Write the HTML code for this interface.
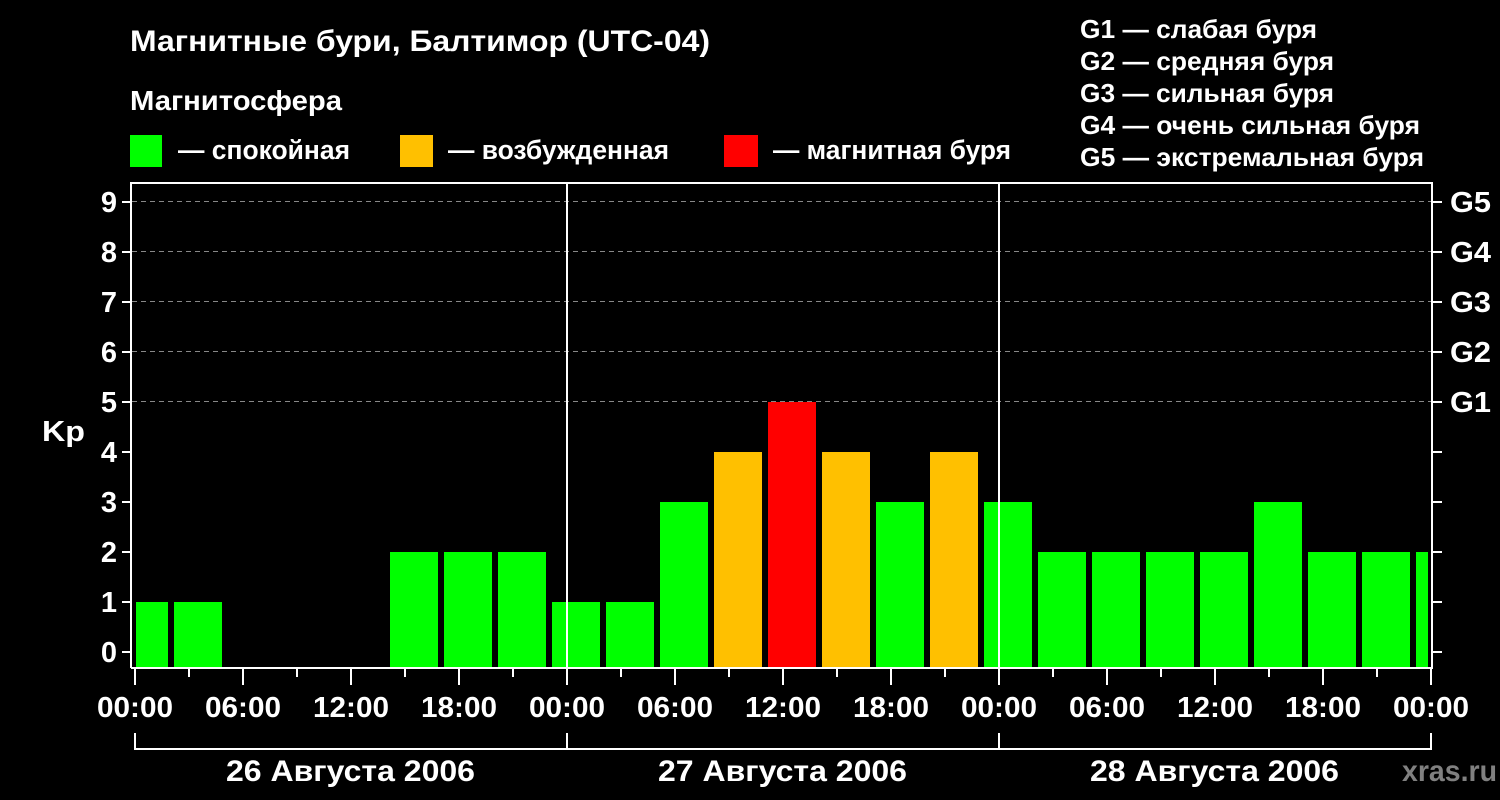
<!DOCTYPE html>
<html><head><meta charset="utf-8"><style>
html,body{margin:0;padding:0;background:#000;width:1500px;height:800px;overflow:hidden}
svg{display:block}
text{font-family:"Liberation Sans",sans-serif;font-weight:bold;fill:#fff}
</style></head><body>
<svg width="1500" height="800" viewBox="0 0 1500 800">
<rect width="1500" height="800" fill="#000"/>
<text x="130" y="51" font-size="30" textLength="580" lengthAdjust="spacingAndGlyphs">Магнитные бури, Балтимор (UTC-04)</text>
<text x="130" y="110" font-size="28" textLength="212" lengthAdjust="spacingAndGlyphs">Магнитосфера</text>
<rect x="130" y="135" width="32" height="32" fill="#00ff00"/>
<text x="178" y="159" font-size="27" textLength="172" lengthAdjust="spacingAndGlyphs">— спокойная</text>
<rect x="400" y="135" width="33" height="32" fill="#ffc000"/>
<text x="448" y="159" font-size="27" textLength="221" lengthAdjust="spacingAndGlyphs">— возбужденная</text>
<rect x="724" y="135" width="34" height="32" fill="#ff0000"/>
<text x="773" y="159" font-size="27" textLength="238" lengthAdjust="spacingAndGlyphs">— магнитная буря</text>
<g font-size="26">
<text x="1080" y="38" textLength="237" lengthAdjust="spacingAndGlyphs">G1 — слабая буря</text>
<text x="1080" y="70" textLength="254" lengthAdjust="spacingAndGlyphs">G2 — средняя буря</text>
<text x="1080" y="102" textLength="254" lengthAdjust="spacingAndGlyphs">G3 — сильная буря</text>
<text x="1080" y="134" textLength="340" lengthAdjust="spacingAndGlyphs">G4 — очень сильная буря</text>
<text x="1080" y="166" textLength="344" lengthAdjust="spacingAndGlyphs">G5 — экстремальная буря</text>
</g>
<g stroke="#888" stroke-width="1" stroke-dasharray="5,4">
<line x1="132" y1="201.5" x2="1431" y2="201.5"/>
<line x1="132" y1="251.5" x2="1431" y2="251.5"/>
<line x1="132" y1="301.5" x2="1431" y2="301.5"/>
<line x1="132" y1="351.5" x2="1431" y2="351.5"/>
<line x1="132" y1="401.5" x2="1431" y2="401.5"/>
</g>
<g>
<rect x="136" y="602" width="32" height="66" fill="#00ff00"/>
<rect x="174" y="602" width="48" height="66" fill="#00ff00"/>
<rect x="390" y="552" width="48" height="116" fill="#00ff00"/>
<rect x="444" y="552" width="48" height="116" fill="#00ff00"/>
<rect x="498" y="552" width="48" height="116" fill="#00ff00"/>
<rect x="552" y="602" width="48" height="66" fill="#00ff00"/>
<rect x="606" y="602" width="48" height="66" fill="#00ff00"/>
<rect x="660" y="502" width="48" height="166" fill="#00ff00"/>
<rect x="714" y="452" width="48" height="216" fill="#ffc000"/>
<rect x="768" y="402" width="48" height="266" fill="#ff0000"/>
<rect x="822" y="452" width="48" height="216" fill="#ffc000"/>
<rect x="876" y="502" width="48" height="166" fill="#00ff00"/>
<rect x="930" y="452" width="48" height="216" fill="#ffc000"/>
<rect x="984" y="502" width="48" height="166" fill="#00ff00"/>
<rect x="1038" y="552" width="48" height="116" fill="#00ff00"/>
<rect x="1092" y="552" width="48" height="116" fill="#00ff00"/>
<rect x="1146" y="552" width="48" height="116" fill="#00ff00"/>
<rect x="1200" y="552" width="48" height="116" fill="#00ff00"/>
<rect x="1254" y="502" width="48" height="166" fill="#00ff00"/>
<rect x="1308" y="552" width="48" height="116" fill="#00ff00"/>
<rect x="1362" y="552" width="48" height="116" fill="#00ff00"/>
<rect x="1416" y="552" width="12" height="116" fill="#00ff00"/>
</g>
<g stroke="#fff" stroke-width="2" fill="none">
<polyline points="131,668 131,183 1432,183 1432,668 131,668"/>
<line x1="567" y1="183" x2="567" y2="668"/>
<line x1="999" y1="183" x2="999" y2="668"/>
</g>
<g stroke="#fff" stroke-width="2">
<line x1="122" y1="202" x2="130" y2="202"/><line x1="122" y1="252" x2="130" y2="252"/><line x1="122" y1="302" x2="130" y2="302"/><line x1="122" y1="352" x2="130" y2="352"/><line x1="122" y1="402" x2="130" y2="402"/><line x1="122" y1="452" x2="130" y2="452"/><line x1="122" y1="502" x2="130" y2="502"/><line x1="122" y1="552" x2="130" y2="552"/><line x1="122" y1="602" x2="130" y2="602"/><line x1="122" y1="652" x2="130" y2="652"/>
<line x1="1433" y1="202" x2="1442" y2="202"/><line x1="1433" y1="252" x2="1442" y2="252"/><line x1="1433" y1="302" x2="1442" y2="302"/><line x1="1433" y1="352" x2="1442" y2="352"/><line x1="1433" y1="402" x2="1442" y2="402"/><line x1="1433" y1="452" x2="1442" y2="452"/><line x1="1433" y1="502" x2="1442" y2="502"/><line x1="1433" y1="552" x2="1442" y2="552"/><line x1="1433" y1="602" x2="1442" y2="602"/><line x1="1433" y1="652" x2="1442" y2="652"/>
<line x1="135" y1="669" x2="135" y2="685"/><line x1="189" y1="669" x2="189" y2="677"/><line x1="243" y1="669" x2="243" y2="685"/><line x1="297" y1="669" x2="297" y2="677"/><line x1="351" y1="669" x2="351" y2="685"/><line x1="405" y1="669" x2="405" y2="677"/><line x1="459" y1="669" x2="459" y2="685"/><line x1="513" y1="669" x2="513" y2="677"/>
<line x1="567" y1="669" x2="567" y2="685"/><line x1="621" y1="669" x2="621" y2="677"/><line x1="675" y1="669" x2="675" y2="685"/><line x1="729" y1="669" x2="729" y2="677"/><line x1="783" y1="669" x2="783" y2="685"/><line x1="837" y1="669" x2="837" y2="677"/><line x1="891" y1="669" x2="891" y2="685"/><line x1="945" y1="669" x2="945" y2="677"/>
<line x1="999" y1="669" x2="999" y2="685"/><line x1="1053" y1="669" x2="1053" y2="677"/><line x1="1107" y1="669" x2="1107" y2="685"/><line x1="1161" y1="669" x2="1161" y2="677"/><line x1="1215" y1="669" x2="1215" y2="685"/><line x1="1269" y1="669" x2="1269" y2="677"/><line x1="1323" y1="669" x2="1323" y2="685"/><line x1="1377" y1="669" x2="1377" y2="677"/><line x1="1431" y1="669" x2="1431" y2="685"/>
</g>
<g stroke="#fff" stroke-width="2" fill="none">
<line x1="135" y1="733" x2="135" y2="750"/><line x1="567" y1="733" x2="567" y2="750"/><line x1="999" y1="733" x2="999" y2="750"/><line x1="1431" y1="733" x2="1431" y2="750"/>
<line x1="134" y1="749" x2="1432" y2="749"/>
</g>
<g font-size="29" text-anchor="end">
<text x="117" y="212">9</text><text x="117" y="262">8</text><text x="117" y="312">7</text><text x="117" y="362">6</text><text x="117" y="412">5</text><text x="117" y="462">4</text><text x="117" y="512">3</text><text x="117" y="562">2</text><text x="117" y="612">1</text><text x="117" y="662">0</text>
</g>
<text x="42" y="441" font-size="29" textLength="43" lengthAdjust="spacingAndGlyphs">Kp</text>
<g font-size="29">
<text x="1450" y="212" textLength="41" lengthAdjust="spacingAndGlyphs">G5</text><text x="1450" y="262" textLength="41" lengthAdjust="spacingAndGlyphs">G4</text><text x="1450" y="312" textLength="41" lengthAdjust="spacingAndGlyphs">G3</text><text x="1450" y="362" textLength="41" lengthAdjust="spacingAndGlyphs">G2</text><text x="1450" y="412" textLength="41" lengthAdjust="spacingAndGlyphs">G1</text>
</g>
<g font-size="29">
<text x="97" y="717" textLength="76" lengthAdjust="spacingAndGlyphs">00:00</text><text x="205" y="717" textLength="76" lengthAdjust="spacingAndGlyphs">06:00</text><text x="313" y="717" textLength="76" lengthAdjust="spacingAndGlyphs">12:00</text><text x="421" y="717" textLength="76" lengthAdjust="spacingAndGlyphs">18:00</text>
<text x="529" y="717" textLength="76" lengthAdjust="spacingAndGlyphs">00:00</text><text x="637" y="717" textLength="76" lengthAdjust="spacingAndGlyphs">06:00</text><text x="745" y="717" textLength="76" lengthAdjust="spacingAndGlyphs">12:00</text><text x="853" y="717" textLength="76" lengthAdjust="spacingAndGlyphs">18:00</text>
<text x="961" y="717" textLength="76" lengthAdjust="spacingAndGlyphs">00:00</text><text x="1069" y="717" textLength="76" lengthAdjust="spacingAndGlyphs">06:00</text><text x="1177" y="717" textLength="76" lengthAdjust="spacingAndGlyphs">12:00</text><text x="1285" y="717" textLength="76" lengthAdjust="spacingAndGlyphs">18:00</text><text x="1393" y="717" textLength="76" lengthAdjust="spacingAndGlyphs">00:00</text>
</g>
<g font-size="30">
<text x="226" y="781" textLength="249" lengthAdjust="spacingAndGlyphs">26 Августа 2006</text>
<text x="658" y="781" textLength="249" lengthAdjust="spacingAndGlyphs">27 Августа 2006</text>
<text x="1090" y="781" textLength="249" lengthAdjust="spacingAndGlyphs">28 Августа 2006</text>
</g>
<text x="1402" y="781" font-size="30" style="fill:#808080" textLength="95" lengthAdjust="spacingAndGlyphs">xras.ru</text>
</svg>
</body></html>
